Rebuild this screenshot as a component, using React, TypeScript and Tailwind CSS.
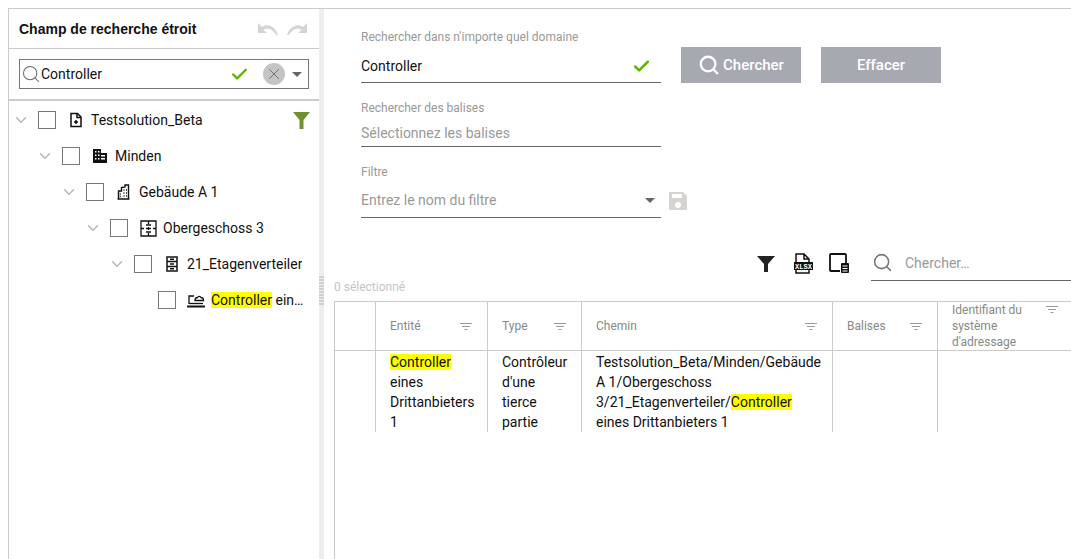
import { Check, ChevronDown, Search, X } from 'lucide-react'

const font = { fontFamily: 'Roboto, "Liberation Sans", Arial, sans-serif' }

function Mark({ children }: { children: string }) {
  return <span className="bg-[#ffff00]">{children}</span>
}

function Caret() {
  return <span className="w-0 h-0 border-x-[5px] border-x-transparent border-t-[5px] border-t-[#666]" />
}

function FilterLines() {
  return (
    <svg width="12" height="9" viewBox="0 0 12 9" className="shrink-0" stroke="#999" fill="none">
      <path d="M0 1.5h12M2 4.5h8M4.5 7.5h3" />
    </svg>
  )
}

const treeIcons = {
  file: (
    <svg width="16" height="16" viewBox="0 0 16 16" fill="none" stroke="#111" strokeWidth="1.5">
      <path d="M3 1.500h6.500l3.500 3.500v9.500H3z" />
      <path d="M9 1.500v4h4" />
      <path d="M8 8v4M6 10h4" />
    </svg>
  ),
  company: (
    <svg width="16" height="16" viewBox="0 0 16 16" fill="#111">
      <path d="M1 1h8v4h6v10H1zM3 3v1.500h1.500V3zm3 0v1.500h1.500V3zM3 6.500V8h1.500V6.500zm3 0V8h1.500V6.500zM3 10v1.500h1.500V10zm3 0v1.500h1.500V10zm3-3v1.500h4V7zm0 3v1.500h4V10z" fillRule="evenodd" />
    </svg>
  ),
  building: (
    <svg width="16" height="16" viewBox="0 0 16 16" fill="none" stroke="#111" strokeWidth="1.4">
      <path d="M2.500 15V7h3V3.500L9 3V1h3.500v14zM1.500 15h12" />
      <path d="M7.500 6h1M10 6h1M7.500 9h1M10 9h1M7.500 12h1M10 12h1M3.800 10h1M3.800 12.500h1" />
    </svg>
  ),
  floor: (
    <svg width="17" height="17" viewBox="0 0 17 17" fill="none" stroke="#111" strokeWidth="1.3">
      <path d="M1 1h15v15H1zM8.500 1v3M8.500 7v3M8.500 13v3M1 8.500h3M6 8.500h5M13 8.500h3M6 5h5M6 12h5" />
    </svg>
  ),
  cabinet: (
    <svg width="14" height="16" viewBox="0 0 14 16" fill="none" stroke="#111" strokeWidth="1.5">
      <path d="M2 1h10v14H2zM2 5.500h10M2 10.500h10" />
      <path d="M5 3.200h4M5 8h4M5 12.800h4" />
    </svg>
  ),
  controller: (
    <svg width="18" height="16" viewBox="0 0 18 16" fill="none" stroke="#111" strokeWidth="1.3">
      <path d="M2 12V4h5" />
      <path d="M8 8.500c0-2 1-3 2.500-3 .5-1.500 3-1.500 3.500 0 1.500 0 2.500 1 2.500 3z" />
      <path d="M0 14.500h18" strokeWidth="2" />
      <path d="M2 11.500h14" />
    </svg>
  ),
}

const treeRows = [
  { indent: 'pl-[5px]', icon: treeIcons.file, label: <span>Testsolution_Beta</span>, open: true, filter: true },
  { indent: 'pl-[29px]', icon: treeIcons.company, label: <span>Minden</span>, open: true },
  { indent: 'pl-[53px]', icon: treeIcons.building, label: <span>Gebäude A 1</span>, open: true },
  { indent: 'pl-[77px]', icon: treeIcons.floor, label: <span>Obergeschoss 3</span>, open: true },
  { indent: 'pl-[101px]', icon: treeIcons.cabinet, label: <span>21_Etagenverteiler</span>, open: true },
  { indent: 'pl-[125px]', icon: treeIcons.controller, label: <span><Mark>Controller</Mark> ein…</span>, open: false },
]

const colsClass = 'grid grid-cols-[41px_112px_94px_251px_105px_134px]'
const cellClass = 'border-r border-[#cdcbc8]'
const headClass = 'border-r border-[#cdcbc8] flex items-center justify-between pl-[14px] pr-[15px]'

export default function App() {
  return (
    <div className="w-[1071px] h-[559px] overflow-hidden bg-white pt-2 pl-2" style={font}>
      <div className="h-full flex border-t border-l border-[#cdcbc8]">
        {/* Left panel */}
        <aside className="w-[310px] shrink-0">
          <div className="h-[40px] flex items-center justify-between pl-[10px] pr-[11px] border-b border-[#cdcbc8]">
            <span className="text-sm font-bold text-[#111]" style={{ fontFamily: '"Liberation Sans", Arial, sans-serif' }}>Champ de recherche étroit</span>
            <div className="flex gap-[7px]">
              <svg width="22" height="12" viewBox="0 0 22 12" fill="#d6d4d2"><path d="M1 0v10h9L6.500 7C9 5 15 5 19 12h2C18 3 10 0 5 4z" /></svg>
              <svg width="22" height="12" viewBox="0 0 22 12" fill="#d6d4d2"><path d="M21 0v10h-9l3.500-3C13 5 7 5 3 12H1C4 3 12 0 17 4z" /></svg>
            </div>
          </div>
          <div className="h-[52px] px-[10px] pt-[10px] border-b-2 border-[#cdcbc8]">
            <div className="h-[30px] flex items-center border border-[#777] pl-[1px] pr-[6px]">
              <Search size={20} strokeWidth={1.25} className="text-[#666] shrink-0" />
              <span className="text-sm text-[#111]">Controller</span>
              <Check size={19} strokeWidth={3} className="ml-auto text-[#5eb800]" />
              <span className="ml-[14px] w-[22px] h-[22px] rounded-full bg-[#c4c4c4] flex items-center justify-center">
                <X size={18} strokeWidth={1} className="text-[#555]" />
              </span>
              <span className="ml-[7px] flex"><Caret /></span>
            </div>
          </div>
          <div className="pt-[1px]">
            {treeRows.map((row, i) => (
              <div key={i} className={`h-9 flex items-center text-sm text-[#111] ${row.indent}`}>
                <span className="w-[13px] mr-[11px] shrink-0">
                  {row.open && <ChevronDown size={18} strokeWidth={2} className="text-[#b8b6b4] -ml-[2px]" />}
                </span>
                <span className="w-[18px] h-[18px] border border-[#777] bg-white shrink-0" />
                <span className="ml-[10px] w-[20px] flex justify-center shrink-0">{row.icon}</span>
                <span className="ml-[5px] truncate">{row.label}</span>
                {row.filter && (
                  <svg width="17" height="17" viewBox="0 0 17 17" fill="#739030" className="ml-auto mr-[9px]">
                    <path d="M0 0h17L10.500 8v9h-4V8z" />
                  </svg>
                )}
              </div>
            ))}
          </div>
        </aside>

        {/* Splitter */}
        <div className="w-[5px] shrink-0 bg-[#eeeeee] relative">
          <div className="absolute left-0 top-[266px] w-[5px] h-[30px] bg-[repeating-linear-gradient(0deg,#cfcfcf_0,#cfcfcf_2px,#eeeeee_2px,#eeeeee_3px)]" />
        </div>

        {/* Right panel */}
        <main className="flex-1 min-w-0 pl-[10px]">
          <div className="pl-[27px] pt-[21px]">
            <div className="flex">
              <div className="w-[300px]">
                <div className="text-xs leading-[14px] text-[#999]">Rechercher dans n'importe quel domaine</div>
                <div className="mt-[6px] h-[33px] flex items-center justify-between border-b border-[#666] text-sm pr-[10px]">
                  <span className="text-[#111]">Controller</span>
                  <Check size={19} strokeWidth={3.25} className="text-[#5eb800]" />
                </div>
                <div className="mt-[18px] text-xs leading-[14px] text-[#999]">Rechercher des balises</div>
                <div className="mt-[5px] h-[27px] flex items-center border-b border-[#666] text-sm text-[#999]">
                  Sélectionnez les balises
                </div>
              </div>
              <div className="ml-5 mt-[17px] flex gap-5">
                <button className="w-[120px] h-9 bg-[#a6a9b0] text-white text-[15px] font-medium flex items-center justify-center gap-[3px]">
                  <Search size={22} strokeWidth={2.5} />
                  Chercher
                </button>
                <button className="w-[120px] h-9 bg-[#a6a9b0] text-white text-[15px] font-medium">Effacer</button>
              </div>
            </div>
            <div className="flex items-end mt-[18px]">
              <div className="w-[300px]">
                <div className="text-xs leading-[14px] text-[#999]">Filtre</div>
                <div className="mt-[4px] h-[35px] flex items-center justify-between border-b border-[#666] text-sm pr-[6px]">
                  <span className="text-[#999]">Entrez le nom du filtre</span>
                  <Caret />
                </div>
              </div>
              <svg width="18" height="18" viewBox="0 0 18 18" fill="#d6d4d2" className="ml-[8px] mb-[8px]">
                <path d="M1 0h13l4 4v13a1 1 0 0 1-1 1H1a1 1 0 0 1-1-1V1a1 1 0 0 1 1-1zm2 2v4h10V2zm6 8a3 3 0 1 0 0 6 3 3 0 0 0 0-6z" fillRule="evenodd" />
              </svg>
            </div>
          </div>

          {/* Toolbar */}
          <div className="mt-[27px] h-[46px] flex items-start justify-end">
            <div className="flex items-center pt-[8px] mr-[21px]">
              <svg width="18" height="18" viewBox="0 0 18 18" fill="#222"><path d="M0 1h18l-7 8v8H7V9z" /></svg>
              <svg width="21" height="21" viewBox="0 0 21 21" fill="none" stroke="#111" strokeWidth="1.5" className="ml-[18px]">
                <path d="M3 9V1h8l5 5v3M11 1v5h5M3 17v3h13v-3" />
                <rect x="1" y="9" width="19" height="8" fill="#111" stroke="none" />
                <text x="10.500" y="15.500" fill="#fff" stroke="none" fontSize="7" fontWeight="700" textAnchor="middle" fontFamily="Liberation Mono, monospace">XLSX</text>
              </svg>
              <svg width="21" height="21" viewBox="0 0 21 21" fill="none" stroke="#111" strokeWidth="1.8" className="ml-[15px]">
                <path d="M11 18H2a1 1 0 0 1-1-1V2a1 1 0 0 1 1-1h14a1 1 0 0 1 1 1v8" />
                <rect x="12" y="10" width="8" height="10" rx="1" fill="#111" stroke="none" />
                <path d="M13.500 13h5M13.500 15.500h5M13.500 18h5" stroke="#fff" strokeWidth="1" />
              </svg>
            </div>
            <div className="w-[200px] h-[36px] flex items-center border-b border-[#666] pl-[1px]">
              <Search size={21} strokeWidth={1.75} className="text-[#777]" />
              <span className="ml-[12px] text-sm text-[#999]">Chercher…</span>
            </div>
          </div>

          <div className="text-xs leading-[14px] text-[#c4c4c4] -mt-[11px]">0 sélectionné</div>

          {/* Table */}
          <div className="mt-[7px] border-l border-t border-[#cdcbc8] h-full">
            <div className={`${colsClass} h-[49px] border-b border-[#cdcbc8] text-xs text-[#888]`}>
              <div className={cellClass} />
              <div className={headClass}>Entité<FilterLines /></div>
              <div className={headClass}>Type<FilterLines /></div>
              <div className={headClass}>Chemin<FilterLines /></div>
              <div className={headClass}>Balises<FilterLines /></div>
              <div className="flex justify-between pl-[14px] pr-[14px] leading-4">
                <span>Identifiant du système d'adressage</span>
                <span className="mt-[3px] ml-1"><FilterLines /></span>
              </div>
            </div>
            <div className={`${colsClass} h-[81px] text-sm leading-5 text-[#111]`}>
              <div className={cellClass} />
              <div className={`${cellClass} pl-[14px] pr-2 pt-[1px]`}><Mark>Controller</Mark> eines Drittanbieters 1</div>
              <div className={`${cellClass} pl-[14px] pr-2 pt-[1px]`}>Contrôleur d'une tierce partie</div>
              <div className={`${cellClass} pl-[14px] pr-2 pt-[1px]`}>Testsolution_Beta/Minden/Gebäude A 1/Obergeschoss 3/21_Etagenverteiler/<Mark>Controller</Mark> eines Drittanbieters 1</div>
              <div className={cellClass} />
              <div />
            </div>
          </div>
        </main>
      </div>
    </div>
  )
}
